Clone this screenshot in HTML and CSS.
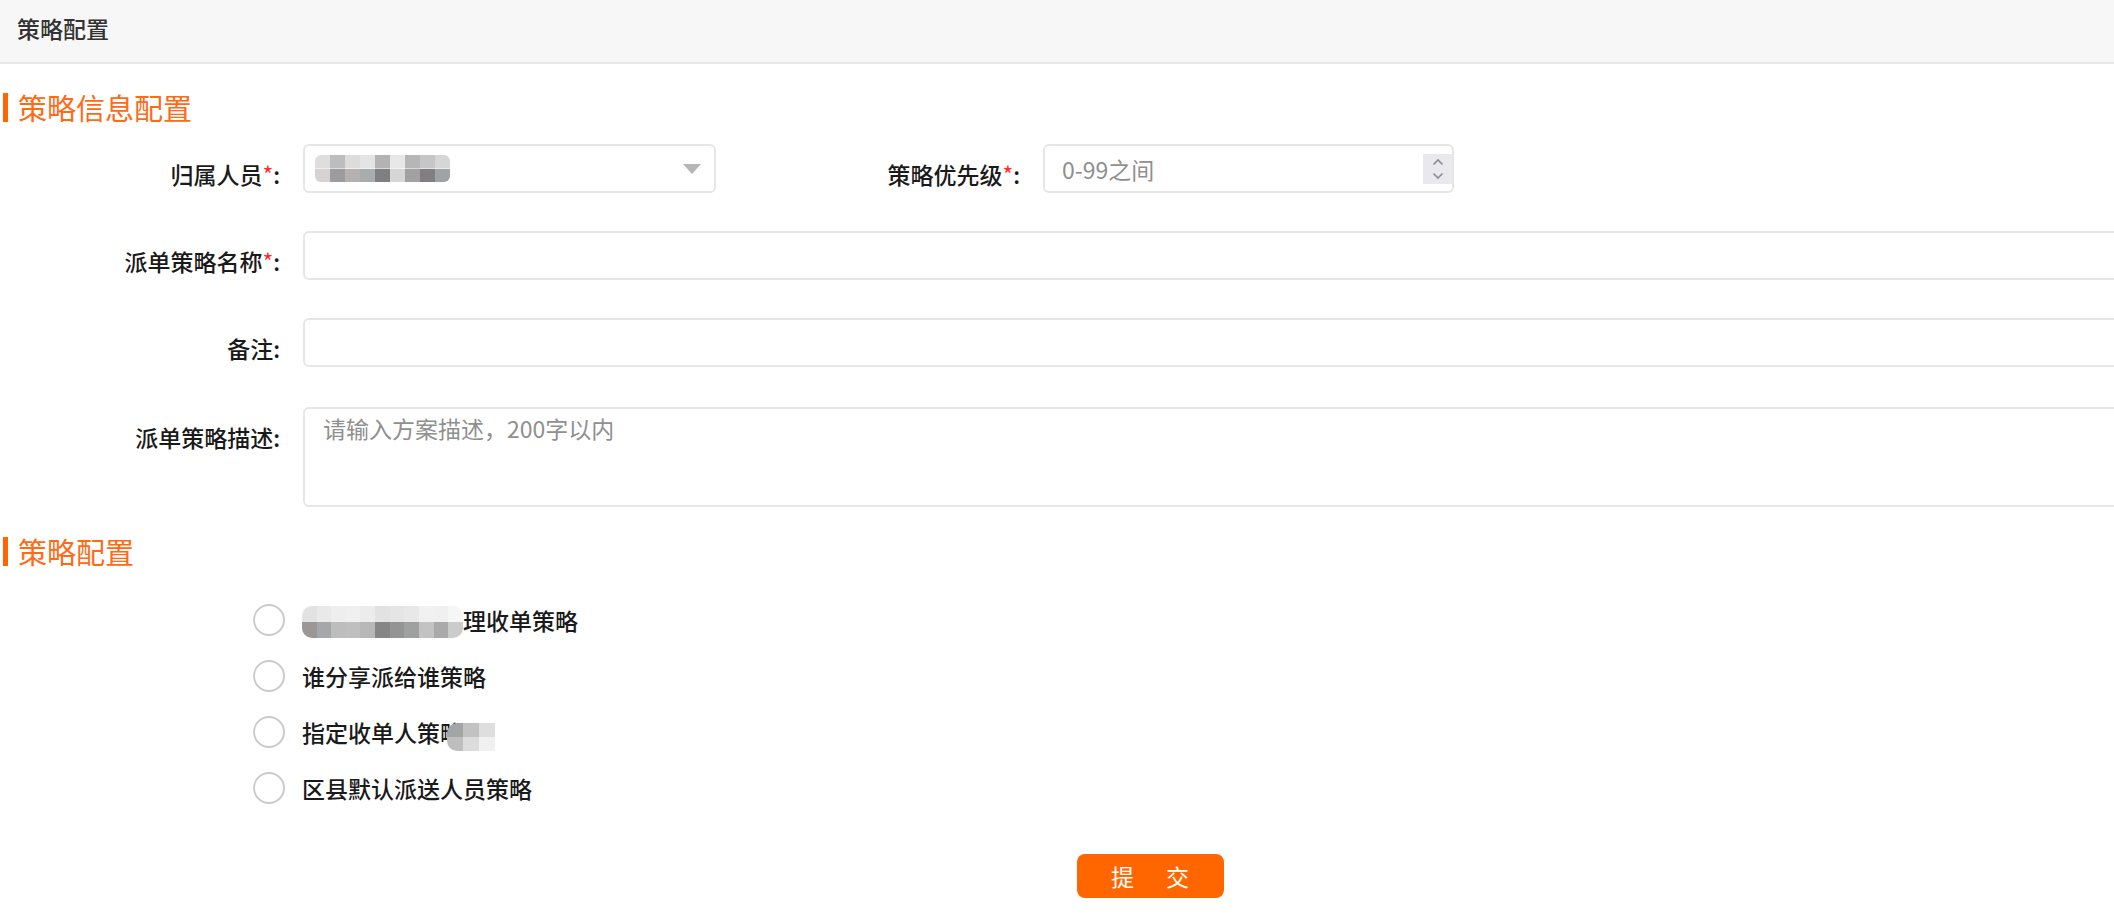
FILE: index.html
```html
<!DOCTYPE html>
<html lang="zh-CN">
<head>
<meta charset="utf-8">
<title>策略配置</title>
<link rel="stylesheet" href="styles.css">
</head>
<body>
<div class="page">
  <div class="topbar">策略配置</div>
  <div class="content">
    <h2 class="section-title">策略信息配置</h2>

    <div class="form-row first">
      <div class="form-item">
        <label class="form-label">归属人员<span class="req">*</span>:</label>
        <div class="control select">
          <span class="mosaic mosaic-select"></span>
          <svg class="select-arrow" width="18" height="10" viewBox="0 0 18 10"><path d="M0 0H18L9 10Z" fill="#b5b5b5"/></svg>
        </div>
      </div>
      <div class="form-item item-2">
        <label class="form-label">策略优先级<span class="req">*</span>:</label>
        <div class="control number-input">
          <input class="bare-input" type="text" placeholder="0-99之间">
          <span class="spinner">
            <svg width="12" height="30" viewBox="0 0 12 30"><path d="M1.5 10.5L6 6L10.5 10.5M1.5 19.5L6 24L10.5 19.5" fill="none" stroke="#8a8a96" stroke-width="1.6"/></svg>
          </span>
        </div>
      </div>
    </div>

    <div class="form-row">
      <label class="form-label">派单策略名称<span class="req">*</span>:</label>
      <input class="control text-input" type="text">
    </div>

    <div class="form-row">
      <label class="form-label">备注:</label>
      <input class="control text-input" type="text">
    </div>

    <div class="form-row textarea-row">
      <label class="form-label">派单策略描述:</label>
      <textarea class="control text-area" placeholder="请输入方案描述，200字以内"></textarea>
    </div>

    <h2 class="section-title second">策略配置</h2>

    <div class="radio-group">
      <div class="radio-item">
        <span class="radio-circle"></span>
        <span class="mosaic mosaic-radio1"></span>
        <span class="radio-text">理收单策略</span>
      </div>
      <div class="radio-item">
        <span class="radio-circle"></span>
        <span class="radio-text">谁分享派给谁策略</span>
      </div>
      <div class="radio-item">
        <span class="radio-circle"></span>
        <span class="radio-text masked">指定收单人策略<span class="mosaic mosaic-radio3"></span></span>
      </div>
      <div class="radio-item">
        <span class="radio-circle"></span>
        <span class="radio-text">区县默认派送人员策略</span>
      </div>
    </div>

    <div class="actions">
      <button class="submit-btn" type="button"><span>提</span><span>交</span></button>
    </div>
  </div>
</div>
</body>
</html>
```
FILE: styles.css
```css
* {
  box-sizing: border-box;
}

html,
body {
  margin: 0;
  padding: 0;
  overflow: hidden;
  background: #ffffff;
  font-family: "Noto Sans CJK SC", "Microsoft YaHei", "Noto Sans", sans-serif;
}

.page {
  width: 100%;
}

.topbar {
  height: 64px;
  background: #f7f7f7;
  border-bottom: 2px solid #e8e8e8;
  display: flex;
  align-items: center;
  padding: 0 0 6px 17px;
  font-size: 23px;
  font-weight: 500;
  color: #333333;
}

.content {
  width: 2300px;
}

.section-title {
  display: flex;
  align-items: center;
  margin: 29px 0 0 3px;
  height: 29px;
  font-size: 29px;
  line-height: 29px;
  font-weight: normal;
  color: #ff6a13;
}

.section-title::before {
  content: "";
  width: 5px;
  height: 29px;
  background: #ff6600;
  margin-right: 10px;
}

.section-title.second {
  margin-top: 30px;
}

.form-row {
  display: flex;
  align-items: flex-start;
  margin-top: 38px;
}

.form-row.first {
  margin-top: 22px;
}

.form-row.textarea-row {
  margin-top: 40px;
}

.form-item {
  display: flex;
  align-items: flex-start;
}

.item-2 {
  margin-left: 24px;
}

.form-label {
  flex: none;
  width: 280px;
  text-align: right;
  font-size: 23px;
  font-weight: 500;
  line-height: 37px;
  padding-top: 12px;
  color: #1a1a1a;
  white-space: nowrap;
}

.req {
  color: #ff2b2b;
  font-weight: normal;
}

.control {
  margin-left: 23px;
  height: 49px;
  border: 2px solid #e6e6e6;
  border-radius: 6px;
  background: #ffffff;
}

.select {
  width: 413px;
  display: flex;
  align-items: center;
  padding: 0 13px 0 10px;
}

.select-arrow {
  margin-left: auto;
}

.number-input {
  width: 411px;
  display: flex;
  align-items: center;
  padding-left: 17px;
  padding-right: 0;
}

.bare-input {
  flex: 1;
  min-width: 0;
  border: none;
  outline: none;
  padding: 0;
  font: inherit;
  font-size: 23px;
  color: #333333;
  background: transparent;
}

.spinner {
  width: 29px;
  height: 30px;
  background: #e9e9ed;
  display: flex;
  align-items: center;
  justify-content: center;
}

.text-input {
  flex: 1;
  outline: none;
  padding: 0 18px;
  font: inherit;
  font-size: 23px;
}

.text-area {
  flex: 1;
  height: 100px;
  outline: none;
  resize: none;
  padding: 4px 18px;
  font: inherit;
  font-size: 23px;
  line-height: 30px;
}

.bare-input::placeholder,
.text-area::placeholder,
.text-input::placeholder {
  color: #8f8f8f;
}

.mosaic {
  display: inline-block;
  flex: none;
  filter: blur(0.6px);
}

.mosaic-select {
  width: 135px;
  height: 27px;
  border-radius: 6px;
  background:
    linear-gradient(to right, #dedede 0 15px, #bdbdbd 15px 30px, #dcdcdc 30px 45px, #e4e4e4 45px 60px, #b3b3b3 60px 75px, #e8e8e8 75px 90px, #b6b6b6 90px 105px, #c6c6c9 105px 120px, #d6d6d6 120px 135px) top / 100% 50% no-repeat,
    linear-gradient(to right, #d6d2cf 0 15px, #9b9c9f 15px 30px, #b6b1ae 30px 45px, #a9acae 45px 60px, #7f7e81 60px 75px, #d6d6d6 75px 90px, #a1a1a1 90px 105px, #807e81 105px 120px, #a0a3a4 120px 135px) bottom / 100% 50% no-repeat;
}

.radio-group {
  margin-top: 26px;
  padding-left: 253px;
}

.radio-item {
  display: flex;
  align-items: center;
  height: 56px;
}

.radio-circle {
  flex: none;
  width: 32px;
  height: 32px;
  border: 2px solid #cbcbcb;
  border-radius: 50%;
  background: #ffffff;
  margin-right: 17px;
}

.radio-text {
  font-size: 23px;
  font-weight: 500;
  line-height: 30px;
  color: #1a1a1a;
  white-space: nowrap;
}

.radio-text.masked {
  position: relative;
}

.mosaic-radio1 {
  width: 161px;
  height: 32px;
  margin-top: 4px;
  border-radius: 10px;
  background:
    linear-gradient(to right, #e2e2e2 0 15px, #e9e9e9 15px 29px, #eeeeee 29px 44px, #f0f0f0 44px 58px, #ececec 58px 73px, #e2e2e2 73px 88px, #e5e5e5 88px 102px, #e8e8e8 102px 117px, #f1f1f1 117px 132px, #f0f0f0 132px 146px, #f6f6f6 146px 161px) top / 100% 50% no-repeat,
    linear-gradient(to right, #9b9795 0 15px, #a5a7aa 15px 29px, #bdbdbd 29px 44px, #bfbfbf 44px 58px, #b8b8b8 58px 73px, #868686 73px 88px, #949494 88px 102px, #9fa1a1 102px 117px, #c3c3c3 117px 132px, #aaaaaa 132px 146px, #cbcbcb 146px 161px) bottom / 100% 50% no-repeat;
}

.mosaic-radio3 {
  position: absolute;
  left: 145px;
  top: 6px;
  width: 48px;
  height: 28px;
  border-radius: 10px 0 0 10px;
  background:
    linear-gradient(to right, #a2a4a5 0 16px, #c2c2c2 16px 32px, #dedede 32px 48px) top / 100% 50% no-repeat,
    linear-gradient(to right, #bebebe 0 16px, #dcdcdc 16px 32px, #f0f0f0 32px 48px) bottom / 100% 50% no-repeat;
}

.actions {
  display: flex;
  justify-content: center;
  margin-top: 38px;
}

.submit-btn {
  width: 147px;
  height: 44px;
  border: none;
  border-radius: 8px;
  background: #ff6600;
  color: #ffffff;
  font: inherit;
  font-size: 23px;
  display: flex;
  align-items: center;
  justify-content: center;
  gap: 32px;
  padding: 0;
}
```
